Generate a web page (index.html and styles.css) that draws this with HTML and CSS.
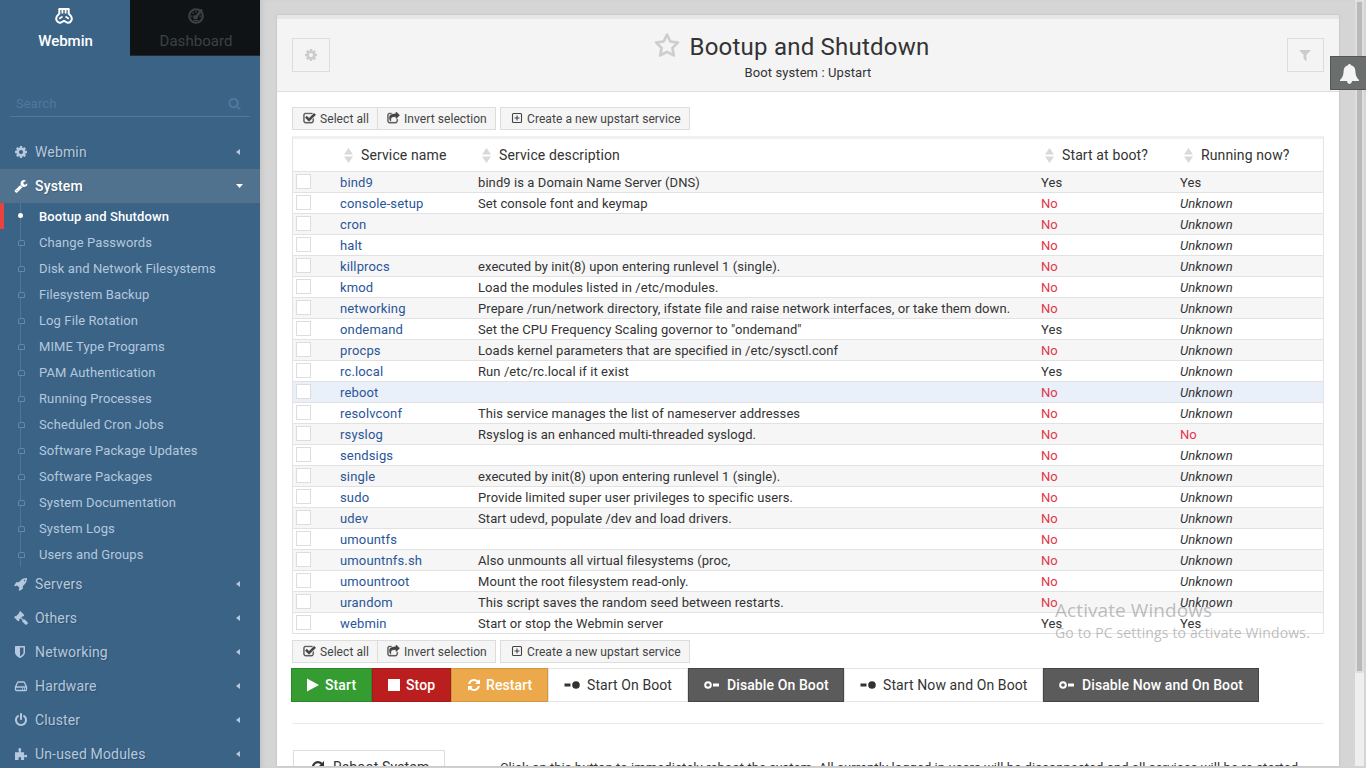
FILE: index.html
```html
<!DOCTYPE html>
<html lang="en">
<head>
<meta charset="utf-8">
<title>Bootup and Shutdown</title>
<link rel="stylesheet" href="styles.css">
</head>
<body>
<svg class="defs" width="0" height="0">
<symbol id="cog" viewBox="0 0 1792 1792"><path d="M1152 896q0-106-75-181t-181-75-181 75-75 181 75 181 181 75 181-75 75-181zm512-109v222q0 12-8 23t-20 13l-185 28q-19 54-39 91 35 50 107 138 10 12 10 25t-9 23q-27 37-99 108t-94 71q-12 0-26-9l-138-108q-44 23-91 38-16 136-29 186-7 28-36 28h-222q-14 0-24.500-8.500t-11.500-21.500l-28-184q-49-16-90-37l-141 107q-10 9-25 9-14 0-25-11-126-114-165-168-7-10-7-23 0-12 8-23 15-21 51-66.500t54-70.500q-27-50-41-99l-183-27q-13-2-21-12.500t-8-23.500v-222q0-12 8-23t19-13l186-28q14-46 39-92-40-57-107-138-10-12-10-24 0-10 9-23 26-36 98.500-107.500t94.500-71.500q13 0 26 10l138 107q44-23 91-38 16-136 29-186 7-28 36-28h222q14 0 24.500 8.500t11.500 21.500l28 184q49 16 90 37l142-107q9-9 24-9 13 0 25 10 129 119 165 170 7 8 7 22 0 12-8 23-15 21-51 66.500t-54 70.500q26 50 41 98l183 28q13 2 21 12.500t8 23.500z"/></symbol>
<symbol id="wrench" viewBox="0 0 1792 1792"><path d="M448 1472q0-26-19-45t-45-19-45 19-19 45 19 45 45 19 45-19 19-45zm644-420l-682 682q-37 37-90 37-52 0-91-37l-106-108q-38-36-38-90 0-53 38-91l681-681q39 98 114.500 173.500t173.500 114.500zm634-435q0 39-23 106-47 134-164.500 217.500t-258.500 83.500q-185 0-316.500-131.500t-131.500-316.500 131.500-316.500 316.500-131.500q58 0 121.500 16.500t107.500 46.500q16 11 16 28t-16 28l-293 169v224l193 107q5-3 79-48.500t135.500-81 70.500-35.500q15 0 23.500 10t8.500 25z"/></symbol>
<symbol id="search" viewBox="0 0 1792 1792"><path d="M1216 832q0-185-131.500-316.500t-316.500-131.500-316.500 131.500-131.500 316.500 131.500 316.500 316.500 131.500 316.500-131.500 131.500-316.500zm512 832q0 52-38 90t-90 38q-54 0-90-38l-343-342q-179 124-399 124-143 0-273.500-55.500t-225-150-150-225-55.500-273.500 55.500-273.500 150-225 225-150 273.500-55.500 273.500 55.500 225 150 150 225 55.500 273.500q0 220-124 399l343 343q37 37 37 90z"/></symbol>
<symbol id="rocket" viewBox="0 0 1792 1792"><path d="M1440 448q0-40-28-68t-68-28-68 28-28 68 28 68 68 28 68-28 28-68zm224-288q0 249-75.500 430.500t-253.500 360.500q-81 80-195 176l-20 379q-2 16-16 26l-384 224q-7 4-16 4-12 0-23-9l-64-64q-13-14-8-32l85-276-281-281-276 85q-3 1-9 1-14 0-23-9l-64-64q-17-19-5-39l224-384q10-14 26-16l379-20q96-114 176-195 188-187 358-258t431-71q14 0 24 9.500t10 22.500z"/></symbol>
<symbol id="gavel" viewBox="0 0 1792 1792"><path d="M1771 1536q0 53-37 90l-107 108q-39 37-91 37-53 0-90-37l-363-364q-38-36-38-90 0-53 43-96l-256-256-126 126q-14 14-34 14t-34-14q2 2 12.500 12t12.500 13 10 11.500 10 13.500 6 13.500 5.500 16.500 1.500 18q0 38-28 68-3 3-16.500 18t-19 20.500-18.500 16.500-22 15.500-22 9-26 4.500q-40 0-68-28l-408-408q-28-28-28-68 0-13 4.500-26t9-22 15.500-22 16.500-18.500 20.500-19 18-16.500q30-28 68-28 10 0 18 1.500t16.500 5.500 13.500 6 13.500 10 11.500 10 13 12.500 12 12.500q-14-14-14-34t14-34l348-348q14-14 34-14t34 14q-2-2-12.500-12t-12.500-13-10-11.500-10-13.500-6-13.500-5.500-16.500-1.500-18q0-38 28-68 3-3 16.500-18t19-20.500 18.500-16.500 22-15.500 22-9 26-4.500q40 0 68 28l408 408q28 28 28 68 0 13-4.500 26t-9 22-15.500 22-16.500 18.500-20.500 19-18 16.500q-30 28-68 28-10 0-18-1.500t-16.500-5.500-13.500-6-13.500-10-11.500-10-13-12.500-12-12.500q14 14 14 34t-14 34l-126 126 256 256q43-43 96-43 52 0 91 37l363 363q37 39 37 91z"/></symbol>
<symbol id="shield" viewBox="0 0 1792 1792"><path d="M1344 960v-640h-448v1137q119-63 213-137 235-184 235-360zm192-768v768q0 86-33.500 170.500t-83 150-118 127.500-126.500 103-121 77.500-89.500 49.500-42.500 20q-12 6-26 6t-26-6q-16-7-42.500-20t-89.500-49.500-121-77.500-126.500-103-118-127.500-83-150-33.500-170.500v-768q0-26 19-45t45-19h1152q26 0 45 19t19 45z"/></symbol>
<symbol id="power" viewBox="0 0 1792 1792"><path d="M1664 896q0 156-61 298t-164 245-245 164-298 61-298-61-245-164-164-245-61-298q0-182 80.500-343t226.500-270q43-32 95.500-25t83.500 50q32 42 24.500 94.500t-49.500 84.500q-98 74-151.500 181t-53.500 228q0 104 40.500 198.500t109.500 163.500 163.500 109.500 198.500 40.500 198.500-40.500 163.500-109.500 109.500-163.500 40.500-198.500q0-121-53.500-228t-151.500-181q-42-32-49.500-84.500t24.500-94.500q31-43 84-50t95 25q146 109 226.500 270t80.500 343zm-640-768v640q0 52-38 90t-90 38-90-38-38-90v-640q0-52 38-90t90-38 90 38 38 90z"/></symbol>
<symbol id="hdd" viewBox="0 0 14 14"><path fill="none" stroke="currentColor" stroke-width="1.300" d="M1.500 8L3.500 3.500Q3.700 3 4.300 3h5.400q.6 0 .8.500L12.500 8v2.600q0 .9-.9.900H2.400q-.9 0-.9-.9V8h11M8 9.800h1M10 9.800h1"/></symbol>
<symbol id="puzzle" viewBox="0 0 14 14"><path d="M1 5.200h3.600Q5.300 4.600 4.600 3.700 3.900 1.200 5.800 1.100 7.700 1.200 7 3.700 6.300 4.600 7.200 5.200h2.900v2.700q.5.700 1.300 0Q13 7.200 13.200 9q-.2 1.900-1.800 1.200-.8-.7-1.300 0V13H7.300q-.9-.6-.2-1.400Q7.500 10 5.800 9.900 4.100 10 4.500 11.600q.7.800-.2 1.400H1z"/></symbol>
<symbol id="star" viewBox="0 0 1792 1792"><path stroke="currentColor" stroke-width="50" d="M1201 1004l306-297-422-62-189-382-189 382-422 62 306 297-73 421 378-199 377 199zm527-357q0 22-26 48l-363 354 86 500q1 7 1 20 0 50-41 50-19 0-40-12l-449-236-449 236q-22 12-40 12-21 0-31.500-14.500t-10.500-35.500q0-6 2-20l86-500-364-354q-25-27-25-48 0-37 56-46l502-73 225-455q19-41 49-41t49 41l225 455 502 73q56 9 56 46z"/></symbol>
<symbol id="filter" viewBox="0 0 1792 1792"><path d="M1595 295q17 41-14 70l-493 493v742q0 42-39 59-13 5-25 5-27 0-45-19l-256-256q-19-19-19-45v-486l-493-493q-31-29-14-70 17-39 59-39h1280q42 0 59 39z"/></symbol>
<symbol id="bell" viewBox="0 0 18 19"><path d="M9 0q1.300 0 1.400 1.200Q14.500 2.300 14.600 7q.1 5.500 3.400 8.200v.9H0v-.9Q3.300 12.500 3.400 7 3.500 2.300 7.600 1.200 7.700 0 9 0zM6.600 16h4.800Q11.200 18.800 9 18.900 6.800 18.800 6.600 16z"/></symbol>
<symbol id="check" viewBox="0 0 1792 1792"><path stroke="currentColor" stroke-width="40" d="M1472 930v318q0 119-84.500 203.500t-203.500 84.500h-832q-119 0-203.500-84.500t-84.500-203.500v-832q0-119 84.500-203.500t203.500-84.500h832q63 0 117 25 15 7 18 23 3 17-9 29l-49 49q-10 10-23 10-3 0-9-2-23-6-45-6h-832q-66 0-113 47t-47 113v832q0 66 47 113t113 47h832q66 0 113-47t47-113v-254q0-13 9-22l64-64q10-10 23-10 6 0 12 3 20 8 20 29zm231-489l-814 814q-24 24-57 24t-57-24l-430-430q-24-24-24-57t24-57l110-110q24-24 57-24t57 24l263 263 647-647q24-24 57-24t57 24l110 110q24 24 24 57t-24 57z"/></symbol>
<symbol id="share" viewBox="0 0 1792 1792"><path stroke="currentColor" stroke-width="40" d="M1472 989v259q0 119-84.500 203.500t-203.500 84.500h-832q-119 0-203.500-84.500t-84.500-203.500v-832q0-119 84.500-203.500t203.500-84.500h255q13 0 22.500 9.500t9.500 22.500q0 27-26 32-77 26-133 60-10 4-16 4h-112q-66 0-113 47t-47 113v832q0 66 47 113t113 47h832q66 0 113-47t47-113v-214q0-19 18-29 28-13 54-37 16-16 35-8 21 9 21 29zm237-496l-384 384q-18 19-45 19-12 0-25-5-39-17-39-59v-192h-160q-323 0-438 131-119 137-74 473 3 23-20 34-8 2-12 2-16 0-26-13-10-14-21-31t-39.500-68.500-49.500-99.500-38.500-114-17.500-122q0-49 3.500-91t14-90 28-88 47-81.500 68.500-74 94.500-61.500 124.500-48.500 159.500-30.500 196.500-11h160v-192q0-42 39-59 13-5 25-5 26 0 45 19l384 384q19 19 19 45t-19 45z"/></symbol>
<symbol id="plus" viewBox="0 0 12 12"><path fill="none" stroke="currentColor" stroke-width="1.100" d="M2.500 1.500h7q1 0 1 1v7q0 1-1 1h-7q-1 0-1-1v-7q0-1 1-1zM6 3.500v5M3.500 6h5"/></symbol>
<symbol id="refresh" viewBox="0 0 1792 1792"><path d="M1639 1056q0 5-1 7-64 268-268 434.500t-478 166.500q-146 0-282.500-55t-243.500-157l-129 129q-19 19-45 19t-45-19-19-45v-448q0-26 19-45t45-19h448q26 0 45 19t19 45-19 45l-137 137q71 66 161 102t187 36q134 0 250-65t186-179q11-17 53-117 8-23 30-23h192q13 0 22.500 9.500t9.500 22.500zm25-800v448q0 26-19 45t-45 19h-448q-26 0-45-19t-19-45 19-45l138-138q-148-137-349-137-134 0-250 65t-186 179q-11 17-53 117-8 23-30 23h-199q-13 0-22.500-9.500t-9.500-22.500v-7q65-268 270-434.500t480-166.500q146 0 284 55.500t245 156.500l130-129q19-19 45-19t45 19 19 45z"/></symbol>
<symbol id="repeat" viewBox="0 0 14 14"><path fill="none" stroke="currentColor" stroke-width="2.200" d="M11 4.200A5 5 0 1 0 11.800 8.500"/><path d="M13 1v5.200H7.800z"/></symbol>
<symbol id="play" viewBox="0 0 14 14"><path d="M1 .5v13L13 7z"/></symbol>
<symbol id="stop" viewBox="0 0 14 14"><path d="M1 1h12v12H1z"/></symbol>
<symbol id="ton" viewBox="0 0 16 8"><path d="M.5 2.500h6v3h-6z"/><circle cx="12" cy="4" r="3.800"/></symbol>
<symbol id="toff" viewBox="0 0 16 8"><circle cx="4" cy="4" r="2.800" fill="none" stroke="currentColor" stroke-width="2"/><path d="M9 2.500h6v3H9z"/></symbol>
<symbol id="sort" viewBox="0 0 9 15"><path d="M4.500 0L9 6.500H0zM4.500 15L9 8.500H0z"/></symbol>
<symbol id="left" viewBox="0 0 4 6"><path d="M4 0v6L0 3z"/></symbol>
<symbol id="down" viewBox="0 0 7 4"><path d="M0 0h7L3.500 4z"/></symbol>
<symbol id="logo" viewBox="0 0 18 16"><path fill="none" stroke="currentColor" stroke-width="2" stroke-linejoin="round" d="M4.300 1h9.400v4.600L16 8.200q1.500 2.300.2 4.600-1.600 2.700-4.200 1.700L9 12.800l-3 1.700q-2.600 1-4.200-1.700Q.5 10.500 2 8.200l2.300-2.600z"/><path fill="none" stroke="currentColor" stroke-width="1.800" d="M7.400 1v4.500M10.600 1v4.500M4.200 10.800l3.300-2.200M13.800 10.800l-3.300-2.200"/></symbol>
<symbol id="gauge" viewBox="0 0 16 16"><circle cx="8" cy="8" r="6.800" fill="none" stroke="currentColor" stroke-width="2.100"/><path fill="none" stroke="currentColor" stroke-width="2.400" d="M7.600 9.500L14 1.500"/><circle cx="7.500" cy="9.300" r="2.300"/><path d="M3 7.500h1.500V9H3zM4.500 4.500H6V6H4.500zM7.300 3h1.500v1.500H7.300zM11.500 7.500H13V9h-1.500zM5.500 12h5v1h-5z"/></symbol>
</svg>
<div class="app">
<aside class="side">
  <div class="tabs">
    <div class="tab on"><svg class="logo"><use href="#logo"/></svg><span>Webmin</span></div>
    <div class="tab off"><svg class="gauge"><use href="#gauge"/></svg><span>Dashboard</span></div>
  </div>
  <div class="search"><span>Search</span><svg><use href="#search"/></svg></div>
  <nav>
    <div class="item"><svg><use href="#cog"/></svg><span>Webmin</span><svg class="left"><use href="#left"/></svg></div>
    <div class="item open"><svg><use href="#wrench"/></svg><span>System</span><svg class="down"><use href="#down"/></svg></div>
    <ul class="sub">
      <li class="cur">Bootup and Shutdown</li><li>Change Passwords</li><li>Disk and Network Filesystems</li><li>Filesystem Backup</li><li>Log File Rotation</li><li>MIME Type Programs</li><li>PAM Authentication</li><li>Running Processes</li><li>Scheduled Cron Jobs</li><li>Software Package Updates</li><li>Software Packages</li><li>System Documentation</li><li>System Logs</li><li>Users and Groups</li>
    </ul>
    <div class="item"><svg><use href="#rocket"/></svg><span>Servers</span><svg class="left"><use href="#left"/></svg></div>
    <div class="item"><svg><use href="#gavel"/></svg><span>Others</span><svg class="left"><use href="#left"/></svg></div>
    <div class="item"><svg class="shield"><use href="#shield"/></svg><span>Networking</span><svg class="left"><use href="#left"/></svg></div>
    <div class="item"><svg><use href="#hdd"/></svg><span>Hardware</span><svg class="left"><use href="#left"/></svg></div>
    <div class="item"><svg><use href="#power"/></svg><span>Cluster</span><svg class="left"><use href="#left"/></svg></div>
    <div class="item"><svg><use href="#puzzle"/></svg><span>Un-used Modules</span><svg class="left"><use href="#left"/></svg></div>
  </nav>
</aside>
<main>
  <section class="panel">
    <header>
      <div class="sq"><svg><use href="#cog"/></svg></div>
      <div class="title"><h1><svg><use href="#star"/></svg><span>Bootup and Shutdown</span></h1><p>Boot system : Upstart</p></div>
      <div class="sq r"><svg><use href="#filter"/></svg></div>
    </header>
    <div class="body">
      <div class="tools"><a class="w1"><svg><use href="#check"/></svg>Select all</a><a class="w2"><svg><use href="#share"/></svg>Invert selection</a><a class="w3"><svg class="plus"><use href="#plus"/></svg>Create a new upstart service</a></div>
      <div class="table" id="services">
        <div class="row head"><span></span><span><svg><use href="#sort"/></svg>Service name</span><span><svg><use href="#sort"/></svg>Service description</span><span><svg><use href="#sort"/></svg>Start at boot?</span><span><svg><use href="#sort"/></svg>Running now?</span></div>
      </div>
      <div class="tools low"><a class="w1"><svg><use href="#check"/></svg>Select all</a><a class="w2"><svg><use href="#share"/></svg>Invert selection</a><a class="w3"><svg class="plus"><use href="#plus"/></svg>Create a new upstart service</a></div>
      <div class="acts">
        <a class="green"><svg><use href="#play"/></svg>Start</a>
        <a class="red"><svg><use href="#stop"/></svg>Stop</a>
        <a class="orange"><svg><use href="#refresh"/></svg>Restart</a>
        <a class="white a4"><svg class="tg"><use href="#ton"/></svg>Start On Boot</a>
        <a class="dark a5"><svg class="tg"><use href="#toff"/></svg>Disable On Boot</a>
        <a class="white a6"><svg class="tg"><use href="#ton"/></svg>Start Now and On Boot</a>
        <a class="dark a7"><svg class="tg"><use href="#toff"/></svg>Disable Now and On Boot</a>
      </div>
      <div class="rule"></div>
      <div class="reboot"><a><svg><use href="#repeat"/></svg>Reboot System</a><p>Click on this button to immediately reboot the system. All currently logged in users will be disconnected and all services will be re-started.</p></div>
    </div>
  </section>
</main>
</div>
<div class="scroll"><div class="thumb"></div></div>
<div class="bell"><svg><use href="#bell"/></svg></div>
<div class="mark"><div class="m1">Activate Windows</div><div class="m2">Go to PC settings to activate Windows.</div></div>
<script src="services.js"></script>
</body>
</html>
```
FILE: services.js
```js
const services = [
  ["bind9", "bind9 is a Domain Name Server (DNS)", "Yes", "Yes"],
  ["console-setup", "Set console font and keymap", "No", "Unknown"],
  ["cron", "", "No", "Unknown"],
  ["halt", "", "No", "Unknown"],
  ["killprocs", "executed by init(8) upon entering runlevel 1 (single).", "No", "Unknown"],
  ["kmod", "Load the modules listed in /etc/modules.", "No", "Unknown"],
  ["networking", "Prepare /run/network directory, ifstate file and raise network interfaces, or take them down.", "No", "Unknown"],
  ["ondemand", "Set the CPU Frequency Scaling governor to \"ondemand\"", "Yes", "Unknown"],
  ["procps", "Loads kernel parameters that are specified in /etc/sysctl.conf", "No", "Unknown"],
  ["rc.local", "Run /etc/rc.local if it exist", "Yes", "Unknown"],
  ["reboot", "", "No", "Unknown"],
  ["resolvconf", "This service manages the list of nameserver addresses", "No", "Unknown"],
  ["rsyslog", "Rsyslog is an enhanced multi-threaded syslogd.", "No", "No"],
  ["sendsigs", "", "No", "Unknown"],
  ["single", "executed by init(8) upon entering runlevel 1 (single).", "No", "Unknown"],
  ["sudo", "Provide limited super user privileges to specific users.", "No", "Unknown"],
  ["udev", "Start udevd, populate /dev and load drivers.", "No", "Unknown"],
  ["umountfs", "", "No", "Unknown"],
  ["umountnfs.sh", "Also unmounts all virtual filesystems (proc,", "No", "Unknown"],
  ["umountroot", "Mount the root filesystem read-only.", "No", "Unknown"],
  ["urandom", "This script saves the random seed between restarts.", "No", "Unknown"],
  ["webmin", "Start or stop the Webmin server", "Yes", "Yes"]
];
const table = document.getElementById("services");
for (const [name, text, boot, now] of services) {
  const row = document.createElement("div");
  row.className = "row" + (name === "reboot" ? " hover" : "");
  const cell = (value, cls) => {
    const s = document.createElement("span");
    s.textContent = value;
    s.className = cls;
    row.appendChild(s);
  };
  cell("", "box");
  cell(name, "link");
  cell(text, "text");
  cell(boot, boot.toLowerCase());
  cell(now, now.toLowerCase());
  table.appendChild(row);
}
```
FILE: styles.css
```css
* { box-sizing: border-box; }
body { margin: 0; height: 768px; overflow: hidden; background: #d5d5d5; font: 13px/20px Roboto, sans-serif; color: #333; }
svg { fill: currentColor; flex: none; }
.defs { position: absolute; }
h1, p, ul { margin: 0; padding: 0; font-weight: 400; }
.app { display: flex; height: 768px; }
.side { width: 260px; background: #3a6386; color: #b5c8de; flex: none; }
.tabs { display: flex; height: 56px; }
.tab { width: 130px; display: flex; flex-direction: column; align-items: center; font-size: 15px; line-height: 20px; padding-top: 8px; font-weight: 500; }
.on { color: #fff; padding-left: 1px; }
.off { background: #0f1315; color: #3d4143; border-bottom: 1px solid #26292b; font-weight: 400; letter-spacing: .05px; padding-left: 2px; }
.tab svg { width: 18px; height: 16px; margin-bottom: 7px; }
.tab .logo { margin-right: 3px; }
.tab .gauge { width: 16px; }
.search { margin: 34px 10px 0; height: 27px; border-bottom: 1px solid #53779a; display: flex; justify-content: space-between; align-items: center; padding: 1px 9px 0 6px; color: #53779c; letter-spacing: .1px; }
.search svg { width: 13px; height: 13px; stroke: currentColor; stroke-width: 50; }
nav { padding-top: 18px; }
.item { height: 34px; display: flex; align-items: center; padding: 0 20px 0 14px; font-size: 14px; }
.item svg { width: 14px; height: 14px; margin-right: 7px; }
.item span { flex: 1; letter-spacing: .15px; text-shadow: 1px 1px 1px rgba(0,0,0,.2); }
.item .shield { margin-left: -1px; margin-right: 8px; }
.item .left { width: 4px; height: 6px; margin: 0; }
.item .down { width: 7px; height: 4px; margin: 0 -3px 0 0; }
.open { background: #50728f; color: #fff; font-weight: 500; }
.sub { list-style: none; background: linear-gradient(#527593, #527593) 20px 0 / 1px 100% no-repeat; }
.sub li { height: 26px; line-height: 28px; padding-left: 39px; letter-spacing: .1px; position: relative; }
.sub li::before { content: ""; position: absolute; left: 18px; top: 11px; width: 5px; height: 4px; border: 1px solid #6788a5; background: #3a6386; border-radius: 2px 2px 0 0; }
.sub .cur { color: #fff; font-weight: 500; border-left: 4px solid #e8443f; padding-left: 35px; }
.sub .cur::before { left: 14px; top: 10px; width: 5px; height: 5px; background: #fff; border: 0; border-radius: 50%; }
main { padding: 15px 27px 2px 17px; flex: 1; min-width: 0; box-shadow: inset 4px 0 4px -2px #c4c4c4; }
.panel { width: 1062px; height: 751px; background: #fff; overflow: hidden; border-top: 4px solid #e6e6e6; box-shadow: 0 0 2px rgba(0,0,0,.15); }
header { height: 73px; background: #f4f4f4; border-bottom: 1px solid #ddd; display: flex; justify-content: space-between; padding: 19px 15px 0; }
.sq { width: 38px; height: 34px; border: 1px solid #ddd; display: flex; align-items: center; justify-content: center; color: #ccc; }
.sq.r { width: 37px; }
.sq svg { width: 14px; height: 14px; }
.title { display: flex; flex-direction: column; align-items: center; margin-top: -6px; }
h1 { font-size: 24px; line-height: 30px; letter-spacing: .23px; display: flex; align-items: center; margin-left: -33px; }
h1 svg { width: 26px; height: 26px; color: #ccc; margin-right: 9px; margin-top: -3px; }
.title p { line-height: 18px; margin-top: 2px; margin-left: -1px; letter-spacing: .1px; }
.body { padding: 15px 15px 0; }
.tools { display: flex; height: 23px; margin-bottom: 6px; }
.tools a { border: 1px solid #ddd; background: #f5f5f5; font-size: 12px; line-height: 21px; display: flex; align-items: center; padding: 1px 0 0 10px; color: #444; letter-spacing: .07px; white-space: nowrap; }
.tools svg { width: 13px; height: 13px; margin: -1px 4px 0 0; }
.tools .w2 { padding-left: 9px; }
.tools .plus { width: 12px; height: 12px; margin: -2px 4px 0 0; }
.w1 { width: 86px; }
.w2 { width: 119px; margin-left: -1px; margin-right: 4px; }
.w3 { width: 190px; }
.table { border: 1px solid #e4e4e4; border-top: 3px solid #f0f0f0; border-bottom: 0; }
.row { display: grid; grid-template-columns: 47px 138px 563px 139px 1fr; height: 21px; line-height: 22px; border-bottom: 1px solid #e2e2e2; letter-spacing: .08px; white-space: nowrap; }
.row:nth-child(even) { background: #f6f6f6; }
.row.hover { background: #e9f0fa; }
.row.head { height: 33px; line-height: 32px; font-size: 14px; letter-spacing: .12px; }
.head span { display: flex; align-items: center; padding-left: 4px; }
.head svg { width: 9px; height: 15px; color: #d9d9d9; margin-right: 8px; margin-top: 1px; }
.box { width: 15px; height: 15px; margin: 2px 0 0 3px; border: 1px solid #ddd; background: #fff; }
.link { color: #2a5599; letter-spacing: .15px; }
.no { color: #e4364a; }
.unknown { font-style: italic; }
.low { margin: 6px 0 5px; }
.acts { display: flex; margin-left: -1px; height: 34px; }
.acts a { border: 1px solid; font-size: 14px; display: flex; align-items: center; padding-left: 15px; letter-spacing: .1px; white-space: nowrap; }
.acts svg { width: 14px; height: 14px; margin-right: 5px; }
.acts .tg { width: 16px; height: 8px; margin-right: 7px; }
.green, .red, .orange, .dark { color: #fff; font-weight: 500; }
.green { background: #359c31; border-color: #2c8729 !important; width: 81px; }
.acts .green { padding-left: 14px; }
.red { background: #bb1e1e; border-color: #ab1a1a !important; width: 79px; }
.acts .red { padding-left: 14px; }
.orange { background: #eca94b; border-color: #d3973f !important; width: 97px; }
.white { border-color: #e4e4e4 !important; }
.dark { background: #5b5b5b; border-color: #454545 !important; }
.a4 { width: 140px; } .a5 { width: 156px; } .a6 { width: 199px; } .a7 { width: 216px; }
.rule { margin-top: 21px; border-top: 1px solid #eaeaea; }
.reboot { display: flex; margin: 26px 0 0 1px; }
.reboot a { width: 152px; height: 34px; border: 1px solid #ddd; display: flex; align-items: center; padding-left: 17px; font-size: 14px; letter-spacing: .15px; }
.reboot svg { width: 14px; height: 14px; margin-right: 8px; }
.reboot p { margin: 8px 0 0 55px; letter-spacing: .08px; white-space: nowrap; }
.scroll { position: absolute; left: 1355px; top: 0; width: 9px; height: 766px; background: #efefef; }
.thumb { height: 673px; background: #b9b9b9; border: 2px solid #dedede; border-radius: 2px; }
.bell { position: absolute; left: 1330px; top: 56px; width: 36px; height: 34px; background: #6a6e6c; border: 1px solid #565656; border-right: 0; color: #f4f4f4; padding: 7px 0 0 9px; }
.bell svg { width: 19px; height: 20px; display: block; }
.mark { position: absolute; left: 1055px; top: 597px; color: rgba(150,150,150,.62); font-family: "Open Sans", sans-serif; white-space: nowrap; }
.m1 { font-size: 19px; line-height: 26px; letter-spacing: .08px; }
.m2 { font-size: 14px; line-height: 20px; letter-spacing: .15px; }
```
